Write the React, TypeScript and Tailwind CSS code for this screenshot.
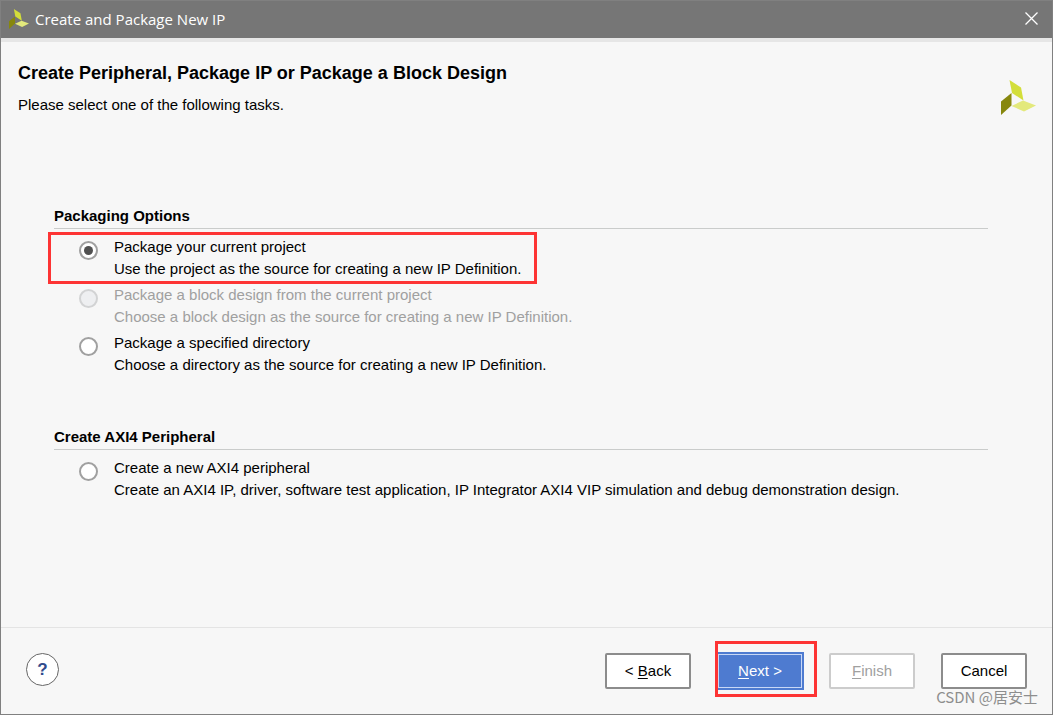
import { useState } from "react";
import type { ReactNode } from "react";

function Logo({ className }: { className: string }) {
  return (
    <svg viewBox="0 0 35 35" className={className} aria-hidden="true">
      <polygon points="8.5,0 20,7.5 22.5,20.5 11,13" fill="#d3de3a" />
      <polygon points="0,21.5 10.5,13 10.5,25.5 0,35" fill="#87870d" />
      <polygon points="10.5,26 22,20.5 35,25.5 23,31.5" fill="#e3e97c" />
    </svg>
  );
}

type OptionProps = {
  id: string;
  title: string;
  description: string;
  selected: string;
  onSelect: (id: string) => void;
  disabled?: boolean;
  highlighted?: boolean;
};

function Option({ id, title, description, selected, onSelect, disabled, highlighted }: OptionProps) {
  return (
    <div className="relative flex items-start gap-4 pl-[25px]">
      <input
        type="radio"
        id={id}
        name="task"
        checked={selected === id}
        onChange={() => onSelect(id)}
        disabled={disabled}
        className="mt-[5px] grid size-[19px] shrink-0 appearance-none place-content-center rounded-full border-2 border-[#a0a0a0] bg-white before:size-[9px] before:rounded-full checked:before:bg-[#505050] disabled:border-[#d2d3d4] disabled:bg-[#eeeff1]"
      />
      <label htmlFor={id} className={disabled ? "text-[#a0a0a0]" : "text-black"}>
        <span className="block">{title}</span>
        <span className="block">{description}</span>
      </label>
      {highlighted && (
        <div className="pointer-events-none absolute -top-1 -bottom-1 -left-1.5 w-[489px] border-3 border-[#fd3434]" />
      )}
    </div>
  );
}

function Section({ title, children }: { title: string; children: ReactNode }) {
  return (
    <fieldset>
      <legend className="w-full border-b border-[#cacccb] pb-px font-bold">{title}</legend>
      <div className="flex flex-col gap-1 pt-[7px]">{children}</div>
    </fieldset>
  );
}

const buttonBase = "h-9 w-[86px] rounded-xs border-2 bg-white";

export default function App() {
  const [selected, setSelected] = useState("current");
  const group = { selected, onSelect: setSelected };

  return (
    <div className="flex min-h-screen flex-col border border-[#808080] bg-[#f7f7f7] font-['Liberation_Sans',Arial,sans-serif] text-[15px] leading-[22px] text-black">
      <header className="flex h-[37px] items-center justify-between bg-[#767676] pr-3.5 pb-0.5 pl-2 text-white">
        <div className="flex items-center gap-1.5">
          <Logo className="size-5" />
          <span className="font-['Open_Sans','Noto_Sans',sans-serif] text-[15px]">Create and Package New IP</span>
        </div>
        <button type="button" aria-label="Close">
          <svg viewBox="0 0 13 13" className="size-[13px]" fill="none" stroke="white" strokeWidth="1.3" aria-hidden="true">
            <path d="M0.5 0.5 12.5 12.5M12.5 0.5 0.5 12.5" />
          </svg>
        </button>
      </header>
      <div className="h-1 bg-[#e6e6e6]" />

      <main className="flex-1">
        <div className="flex items-start justify-between pt-5 pr-4 pl-[17px]">
          <div>
            <h1 className="text-lg leading-[22px] font-bold">
              Create Peripheral, Package IP or Package a Block Design
            </h1>
            <p className="mt-2.5">Please select one of the following tasks.</p>
          </div>
          <Logo className="mt-[18px] size-[35px]" />
        </div>

        <div className="flex flex-col gap-[50px] pt-[89px] pr-16 pb-6 pl-[53px]">
          <Section title="Packaging Options">
            <Option
              id="current"
              title="Package your current project"
              description="Use the project as the source for creating a new IP Definition."
              highlighted
              {...group}
            />
            <Option
              id="block"
              title="Package a block design from the current project"
              description="Choose a block design as the source for creating a new IP Definition."
              disabled
              {...group}
            />
            <Option
              id="directory"
              title="Package a specified directory"
              description="Choose a directory as the source for creating a new IP Definition."
              {...group}
            />
          </Section>
          <Section title="Create AXI4 Peripheral">
            <Option
              id="axi"
              title="Create a new AXI4 peripheral"
              description="Create an AXI4 IP, driver, software test application, IP Integrator AXI4 VIP simulation and debug demonstration design."
              {...group}
            />
          </Section>
        </div>
      </main>

      <footer className="relative flex items-start justify-between border-t border-[#e4e4e4] px-[25px] pt-[25px] pb-[25px]">
        <button
          type="button"
          aria-label="Help"
          className="size-[33px] rounded-full border border-[#666666] bg-white text-[17px] font-bold text-[#304b8c]"
        >
          ?
        </button>
        <div className="flex items-center gap-[26px]">
          <button type="button" className={`${buttonBase} border-[#8c8c8c]`}>
            &lt; <u className="underline-offset-2">B</u>ack
          </button>
          <div className="relative">
            <button type="button" className="-m-px block h-[38px] w-[88px] bg-[#4e7bd0] p-0.5 text-white">
              <span className="flex h-full items-center justify-center border border-[#c8d8f6] whitespace-pre">
                <u className="underline-offset-2">N</u>ext &gt;
              </span>
            </button>
            <div className="pointer-events-none absolute -top-3 -left-0.5 h-14 w-[102px] border-3 border-[#fd3434]" />
          </div>
          <button type="button" disabled className={`${buttonBase} border-[#cccccc] text-[#a0a0a0]`}>
            <u className="underline-offset-2">F</u>inish
          </button>
          <button type="button" className={`${buttonBase} border-[#8c8c8c]`}>
            Cancel
          </button>
        </div>
        <span className="pointer-events-none absolute right-3.5 bottom-[7px] font-['Noto_Sans_CJK_SC',sans-serif] text-[15px] leading-5 text-[#8e8e8e]">
          CSDN @居安士
        </span>
      </footer>
    </div>
  );
}
